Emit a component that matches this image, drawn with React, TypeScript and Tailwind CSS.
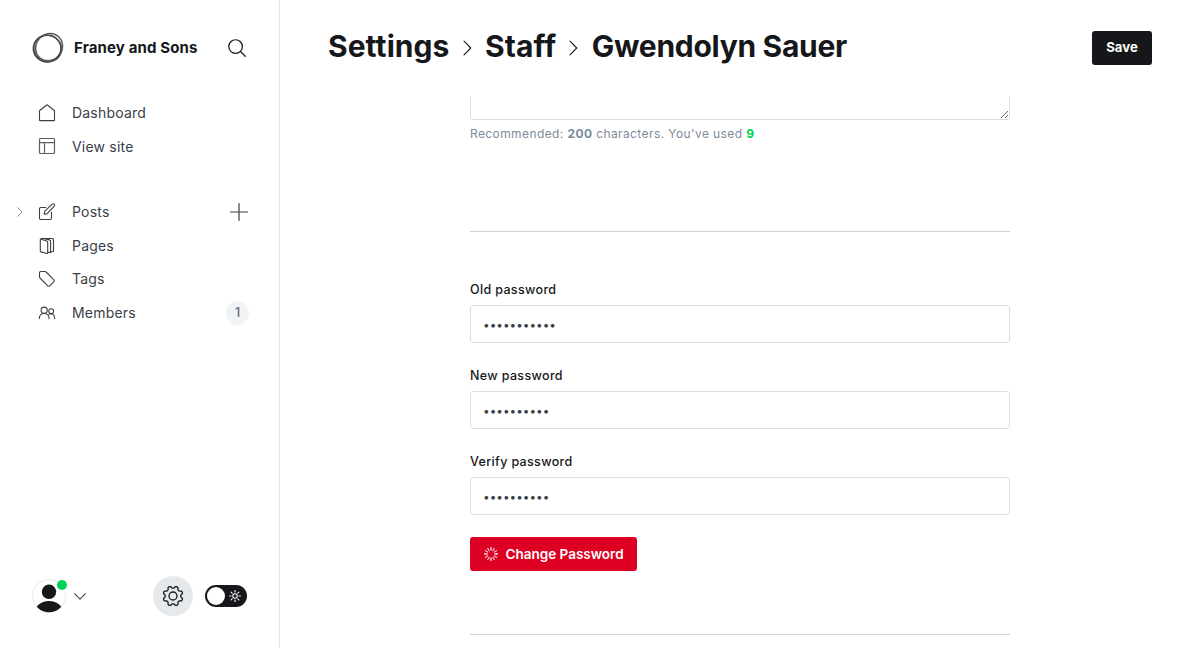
import type { ReactNode } from "react";

type IconProps = { className?: string; children: ReactNode; box?: string; stroke?: number };

function Icon({ className = "", children, box = "0 0 24 24", stroke = 1.5 }: IconProps) {
  return (
    <svg
      viewBox={box}
      className={`block shrink-0 ${className}`}
      fill="none"
      stroke="currentColor"
      strokeWidth={stroke}
      strokeLinecap="round"
      strokeLinejoin="round"
    >
      {children}
    </svg>
  );
}

function NavItem({ icon, label, right, left }: { icon: ReactNode; label: string; right?: ReactNode; left?: ReactNode }) {
  return (
    <li className="flex h-[33.6px] items-center pr-[30px] text-[14px] leading-5 tracking-[0.2px] text-[#394047]">
      <span className="flex w-[38px] justify-center pl-[2px]">{left}</span>
      <span className="flex w-[34px]">{icon}</span>
      <span className="flex-1">{label}</span>
      {right}
    </li>
  );
}

function PasswordField({ label, value }: { label: string; value: string }) {
  return (
    <label className="block h-[86px]">
      <span className="block h-[23px] text-[12.5px] leading-4 font-medium tracking-[0.35px] text-[#15171a]">{label}</span>
      <input
        type="password"
        defaultValue={value}
        className="block h-[38px] w-full rounded-[3px] border border-[#dddedf] bg-white px-3 pt-px text-[11.8px] text-[#394047] outline-none"
      />
    </label>
  );
}

function Chevron() {
  return (
    <Icon box="0 0 9 16" stroke={1.1} className="mt-[4px] h-4 w-[9px] text-[#15171a]">
      <path d="M1 1.2l6.8 6.8-6.8 6.8" />
    </Icon>
  );
}

const spokes = [0, 30, 60, 90, 120, 150, 180, 210, 240, 270, 300, 330];
const rays = [0, 45, 90, 135, 180, 225, 270, 315];

// Eight rounded teeth, with a gap at the top centre.
const gearPath =
  Array.from({ length: 160 }, (_, i) => {
    const t = (i / 160) * Math.PI * 2;
    const r = 8.9 - 1.15 * Math.tanh(1.8 * Math.cos(8 * t));
    return `${i ? "L" : "M"}${(11 + r * Math.sin(t)).toFixed(2)} ${(11 - r * Math.cos(t)).toFixed(2)}`;
  }).join("") + "Z";

export default function App() {
  return (
    <div className="flex h-[648px] w-[1200px] overflow-hidden bg-white font-['Inter',sans-serif] text-[#15171a] antialiased">
      <nav className="flex w-[280px] shrink-0 flex-col border-r border-[#e5e7e9]">
        <header className="flex h-24 items-center pr-[33px] pl-8">
          <svg viewBox="0 0 32 32" className="h-8 w-8 shrink-0" fill="none">
            <ellipse cx="17" cy="15.2" rx="12.8" ry="14.2" stroke="#aaa" strokeWidth="2" transform="rotate(40 17 15.2)" />
            <ellipse cx="15.2" cy="16.6" rx="13.8" ry="13.4" stroke="#333" strokeWidth="1.5" />
            <ellipse cx="17" cy="15.2" rx="13.2" ry="14.2" stroke="#444" strokeWidth="0.9" transform="rotate(40 17 15.2)" />
            <ellipse cx="15.8" cy="16.4" rx="14.1" ry="12.9" stroke="#555" strokeWidth="1" transform="rotate(30 15.8 16.4)" />
          </svg>
          <span className="ml-[10px] flex-1 text-[15px] font-bold tracking-[0.14px] whitespace-nowrap">Franey and Sons</span>
          <Icon className="h-[18px] w-[18px]" box="0 0 19 19" stroke={1.3}>
            <circle cx="8" cy="8" r="7.2" />
            <path d="M13.2 13.2l5 5" />
          </Icon>
        </header>

        <ul className="pt-[0.2px]">
          <NavItem
            label="Dashboard"
            icon={
              <Icon className="h-[18px] w-[18px]" box="0 0 18 18" stroke={1.1}>
                <path d="M1.5 6.7v9.2c0 .4.3.7.7.7h13.6c.4 0 .7-.3.7-.7V6.7L9.7 1.2a1 1 0 0 0-1.4 0z" />
              </Icon>
            }
          />
          <NavItem
            label="View site"
            icon={
              <Icon className="-mt-px h-[18px] w-[18px] text-[#5b6167]" box="0 0 18 18" stroke={1.2}>
                <rect x="1.5" y="1.5" width="15" height="15" rx="1" />
                <path d="M1.5 5.7h15M6.5 5.7v10.8" />
              </Icon>
            }
          />
        </ul>

        <ul className="mt-[31.8px]">
          <NavItem
            label="Posts"
            left={
              <Icon className="h-[10px] w-[6px] text-[#7c8b9a]" box="0 0 6 10" stroke={1}>
                <path d="M.7.7L5.2 5 .7 9.3" />
              </Icon>
            }
            icon={
              <Icon className="h-[18px] w-[18px]" box="0 0 18 18" stroke={1.1}>
                <path d="M13.5 9.3v6c0 .7-.5 1.2-1.2 1.2H2.7c-.7 0-1.2-.5-1.2-1.2V5.7c0-.7.5-1.2 1.2-1.2h5" />
                <path d="M9.2 10.6l-3 .6.6-3 7.4-7a1.35 1.35 0 0 1 2 2z" />
              </Icon>
            }
            right={
              <Icon className="h-5 w-5 text-[#394047]" box="0 0 20 20" stroke={1.2}>
                <path d="M10 1.5v17M1.5 10h17" />
              </Icon>
            }
          />
          <NavItem
            label="Pages"
            icon={
              <Icon className="h-[18px] w-[18px]" box="0 0 18 18" stroke={1.1}>
                <path d="M2.3 2.5v11.6c0 .4.2.6.6.8l5.8 1.6c.6.1 1-.2 1-.7V5.2c0-.6-.3-1-.9-1.1L3.2 2.2c-.5-.2-.9 0-.9.3z" />
                <path d="M3.300 1.500h11.200c.6 0 1 .4 1 1v11.300c0 .6-.4 1-1 1h-1.900M6.500 1.600l5 1.300c.7.2 1.100.6 1.100 1.300v11.500l-2.700-.6" />
              </Icon>
            }
          />
          <NavItem
            label="Tags"
            icon={
              <Icon className="h-[18px] w-[18px]" box="0 0 18 18" stroke={1.1}>
                <path d="M1.5 2.7v4.2c0 .4.2.8.5 1.1l7.8 7.9a1.3 1.3 0 0 0 1.9 0l4.2-4.2a1.3 1.3 0 0 0 0-1.9L8.1 2a1.5 1.5 0 0 0-1.1-.5H2.7c-.7 0-1.2.5-1.2 1.2z" />
              </Icon>
            }
          />
          <NavItem
            label="Members"
            icon={
              <Icon className="h-[18px] w-[18px]" box="0 0 18 18" stroke={1.1}>
                <circle cx="6.2" cy="6.2" r="3.1" />
                <circle cx="13.2" cy="7.2" r="2.4" />
                <path d="M1.3 14.6c0-3 2.1-5.2 4.9-5.2s4.9 2.2 4.9 5.2M11 10.4c3.2-2 5.7.5 5.7 4.2" />
              </Icon>
            }
            right={
              <span className="flex h-6 w-[23px] items-center justify-center rounded-full bg-[#f1f3f4] text-[12.5px] font-medium tracking-normal text-[#626d79]">
                1
              </span>
            }
          />
        </ul>

        <footer className="mt-auto flex h-[104px] items-center pl-8">
          <div className="relative h-[34px] w-[34px]">
            <svg viewBox="0 0 34 34" className="h-[34px] w-[34px]">
              <defs>
                <clipPath id="avatar">
                  <circle cx="17" cy="17" r="16.3" />
                </clipPath>
              </defs>
              <circle cx="17" cy="17" r="16.5" fill="#fff" stroke="#e8eaec" strokeWidth="1" />
              <g clipPath="url(#avatar)" fill="#15171a">
                <circle cx="17" cy="12.8" r="7.2" />
                <ellipse cx="17" cy="32" rx="13.5" ry="10" />
              </g>
            </svg>
            <span className="absolute top-[1px] left-[25px] h-[10px] w-[10px] rounded-full bg-[#00d35b]" />
          </div>
          <Icon className="ml-2 h-[7px] w-3 text-[#394047]" box="0 0 12 7" stroke={1.1}>
            <path d="M.7.7L6 6.1 11.3.7" />
          </Icon>
          <div className="ml-[67px] flex h-10 w-10 items-center justify-center rounded-full bg-[#e6e9eb]">
            <Icon className="h-[22px] w-[22px]" box="0 0 22 22" stroke={1.3}>
              <circle cx="11" cy="11" r="4" />
              <path d={gearPath} />
            </Icon>
          </div>
          <div className="ml-3 flex h-[22px] w-[42px] items-center rounded-full bg-[#15171a] pl-[2px]">
            <span className="h-[18px] w-[18px] rounded-full bg-white" />
            <svg viewBox="0 0 12 12" className="ml-1 h-3 w-3" fill="none" stroke="#fff" strokeWidth="1.1" strokeLinecap="round">
              <circle cx="6" cy="6" r="2.2" />
              {rays.map((a) => (
                <path key={a} d="M6 .6v1.4" transform={`rotate(${a} 6 6)`} />
              ))}
            </svg>
          </div>
        </footer>
      </nav>

      <main className="flex flex-1 flex-col">
        <header className="flex h-24 shrink-0 items-center justify-between px-12">
          <h1 className="-mt-[4px] flex items-center text-[30px] leading-10 font-bold whitespace-nowrap">
            <span className="tracking-[0.05px]">Settings</span>
            <span className="mr-[13px] ml-[13.6px]"><Chevron /></span>
            <span className="tracking-[0.1px]">Staff</span>
            <span className="mr-[14px] ml-[12.5px]"><Chevron /></span>
            <span className="tracking-[-0.3px]">Gwendolyn Sauer</span>
          </h1>
          <button className="h-[34px] w-[60px] rounded-[3px] bg-[#15171a] text-[13.2px] font-bold text-white">Save</button>
        </header>

        <section className="ml-[190px] flex w-[540px] flex-col">
          <div className="flex h-6 items-end overflow-hidden">
            <textarea className="block h-[120px] w-full shrink-0 resize-y rounded-[3px] border border-[#dddedf] outline-none" />
          </div>
          <p className="mt-[5px] h-[106px] text-[12px] leading-[18px] tracking-[0.4px] text-[#7c8b9a]">
            Recommended: <b className="font-bold">200</b> characters. You've used{" "}
            <b className="font-bold text-[#00d35b]">9</b>
          </p>
          <hr className="border-[#ced4d9]" />
          <form className="pt-[50px]">
            <PasswordField label="Old password" value="oldpassword" />
            <PasswordField label="New password" value="newpasswor" />
            <PasswordField label="Verify password" value="newpasswor" />
            <button
              type="button"
              className="-mt-[3px] flex h-[34px] w-[167px] items-center rounded-[3px] bg-[#de0023] pl-[13px] text-[13.5px] font-semibold whitespace-nowrap text-white"
            >
              <svg viewBox="0 0 16 16" className="mr-[6.5px] h-4 w-4" stroke="#fff" strokeWidth="1.3" strokeLinecap="round">
                {spokes.map((a) => (
                  <path key={a} d="M8 1.6v2.5" transform={`rotate(${a} 8 8)`} opacity={a % 90 === 0 ? 0.9 : 0.75} />
                ))}
              </svg>
              Change Password
            </button>
          </form>
          <hr className="mt-[63px] border-[#ced4d9]" />
        </section>
      </main>
    </div>
  );
}
